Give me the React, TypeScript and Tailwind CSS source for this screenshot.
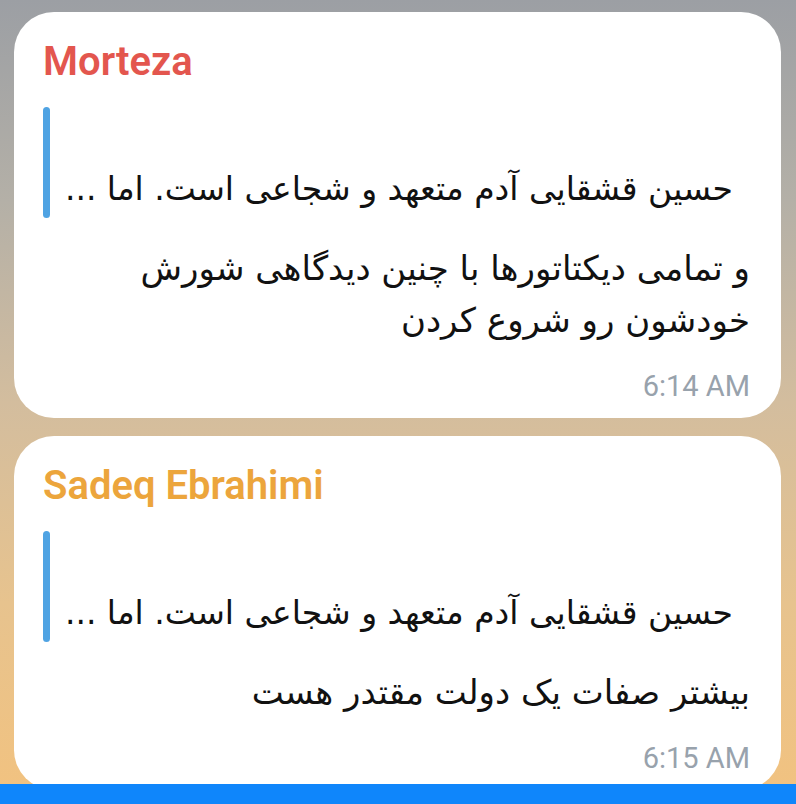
import React from "react";

type Msg = {
  name: string;
  nameColor: string;
  quote: string;
  lines: string[];
  time: string;
};

const msgs: Msg[] = [
  {
    name: "Morteza",
    nameColor: "text-[#e3564e]",
    quote: "حسین قشقایی آدم متعهد و شجاعی است. اما ...",
    lines: ["و تمامی دیکتاتورها با چنین دیدگاهی شورش", "خودشون رو شروع کردن"],
    time: "6:14 AM",
  },
  {
    name: "Sadeq Ebrahimi",
    nameColor: "text-[#eca53c]",
    quote: "حسین قشقایی آدم متعهد و شجاعی است. اما ...",
    lines: ["بیشتر صفات یک دولت مقتدر هست"],
    time: "6:15 AM",
  },
];

function Card({ m }: { m: Msg }) {
  return (
    <div className="flex flex-col rounded-[40px] bg-white pl-[29px] pr-[31px] pt-[27px] pb-[15px]">
      <div
        className={`text-[40px] leading-[46px] font-semibold ${m.nameColor}`}
        style={{ fontFamily: "Roboto, 'Liberation Sans', sans-serif" }}
      >
        {m.name}
      </div>
      <div className="mt-[22px] flex h-[111px]">
        <div className="w-[7px] rounded-full bg-[#4fa3e3]" />
        <div className="flex-1 pr-[17px] pt-[62px]">
          <div
            dir="rtl"
            className="text-[33px] leading-[40px] text-[#111] whitespace-nowrap"
            style={{ fontFamily: "'DejaVu Sans', sans-serif" }}
          >
            {m.quote}
          </div>
        </div>
      </div>
      <div
        dir="rtl"
        className="mt-[24px] text-[34px] leading-[52px] text-[#111]"
        style={{ fontFamily: "'DejaVu Sans', sans-serif" }}
      >
        {m.lines.map((l, i) => (
          <div key={i} className="whitespace-nowrap">
            {l}
          </div>
        ))}
      </div>
      <div
        className="mt-[23px] text-right text-[29px] leading-[34px] text-[#98a2ac]"
        style={{ fontFamily: "Roboto, 'Liberation Sans', sans-serif" }}
      >
        {m.time}
      </div>
    </div>
  );
}

export default function App() {
  return (
    <div className="relative h-[804px] w-[796px] overflow-hidden bg-[linear-gradient(180deg,#9c9fa4_0%,#b4b0a7_25%,#d3bd9e_50%,#e7c38e_75%,#f2c27f_100%)]">
      <div className="flex flex-col gap-[18px] pl-[14px] pr-[15px] pt-[12px]">
        {msgs.map((m, i) => (
          <Card key={i} m={m} />
        ))}
      </div>
      <div className="absolute bottom-0 left-0 right-0 h-[20px] bg-[#0f86fb]" />
    </div>
  );
}
